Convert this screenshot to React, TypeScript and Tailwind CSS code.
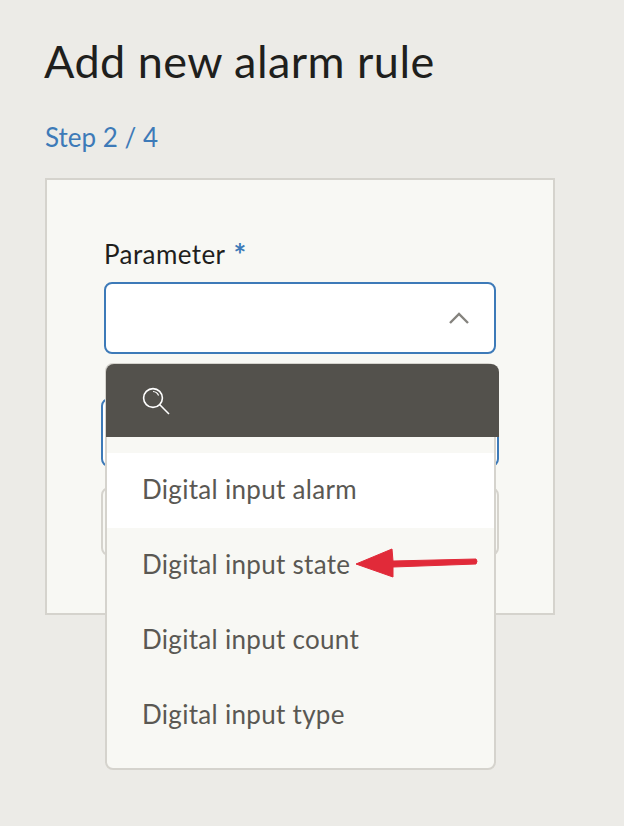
export default function App() {
  return (
    <div className="relative h-[826px] w-[624px] overflow-hidden bg-[#ecebe7] pl-[44px] pt-[37px] font-['Lato',sans-serif]">
      <h1 className="text-[45px] leading-[48px] font-normal tracking-[0.45px] text-[#1f1f1d]">Add new alarm rule</h1>
      <p className="mt-[39px] pl-px text-[26px] leading-[26px] text-[#3d7ab8]">Step 2 / 4</p>
      <div className="relative mt-[28px] ml-px h-[437px] w-[510px] border-2 border-[#d5d3cd] bg-[#f8f8f4] px-[57px] pt-[57px]">
        <label className="flex h-[34px] items-center text-[26px] leading-[34px] tracking-[0.4px] text-[#1f1f1d]">
          Parameter
          <span className="ml-[8px] text-[30px] leading-[34px] font-bold text-[#3d7ab8]">*</span>
        </label>
        <div className="relative mt-[11px] flex h-[72px] w-[392px] items-center justify-end rounded-[8px] border-2 border-[#3d7ab8] bg-white pr-[25px]">
          <svg width="20" height="12" viewBox="0 0 20 12" fill="none" stroke="#85837e" strokeWidth="2.4">
            <path d="M1 11 L10 2 L19 11" />
          </svg>
        </div>
        <div className="mt-[44px] -ml-[3px] h-[69px] w-[398px] rounded-[8px] border-2 border-[#3d7ab8] bg-white" />
        <div className="mt-[20px] -ml-[3px] h-[69px] w-[398px] rounded-[8px] border-2 border-[#d5d3cd] bg-[#f8f8f4]" />
      </div>

      <div className="absolute left-[105px] top-[363px] h-[407px] w-[391px] rounded-[8px] border-2 border-[#d5d3cd] bg-[#f8f8f4] text-[26px] tracking-[0.3px] text-[#5a5853]">
        <div className="-mx-px -mt-px flex h-[73px] w-[393px] items-center rounded-t-[8px] bg-[#53514c] pl-[35px]">
          <svg width="30" height="30" viewBox="0 0 30 30" fill="none" stroke="#ffffff" strokeWidth="1.6">
            <circle cx="12" cy="12" r="9.4" />
            <path d="M18.8 18.8 L28 28" />
            <path d="M12 5.5 A6.5 6.5 0 0 1 17.6 9.5" strokeWidth="1.2" />
          </svg>
        </div>
        <ul className="pt-[16px]">
          <li className="flex h-[75px] items-center bg-white pb-[3px] pl-[35px]">Digital input alarm</li>
          <li className="flex h-[75px] items-center pb-[3px] pl-[35px]">Digital input state</li>
          <li className="flex h-[75px] items-center pb-[3px] pl-[35px]">Digital input count</li>
          <li className="flex h-[75px] items-center pb-[3px] pl-[35px]">Digital input type</li>
        </ul>
      </div>

      <svg className="absolute left-[350px] top-[540px]" width="135" height="45" viewBox="0 0 135 45" fill="none">
        <path d="M6 24 L42 9 L43 21 L126 19 Q128 21 126 24 L43 27 L43 37 Z" fill="#e12a39" stroke="#e12a39" strokeWidth="1" strokeLinejoin="round" />
      </svg>
    </div>
  );
}
